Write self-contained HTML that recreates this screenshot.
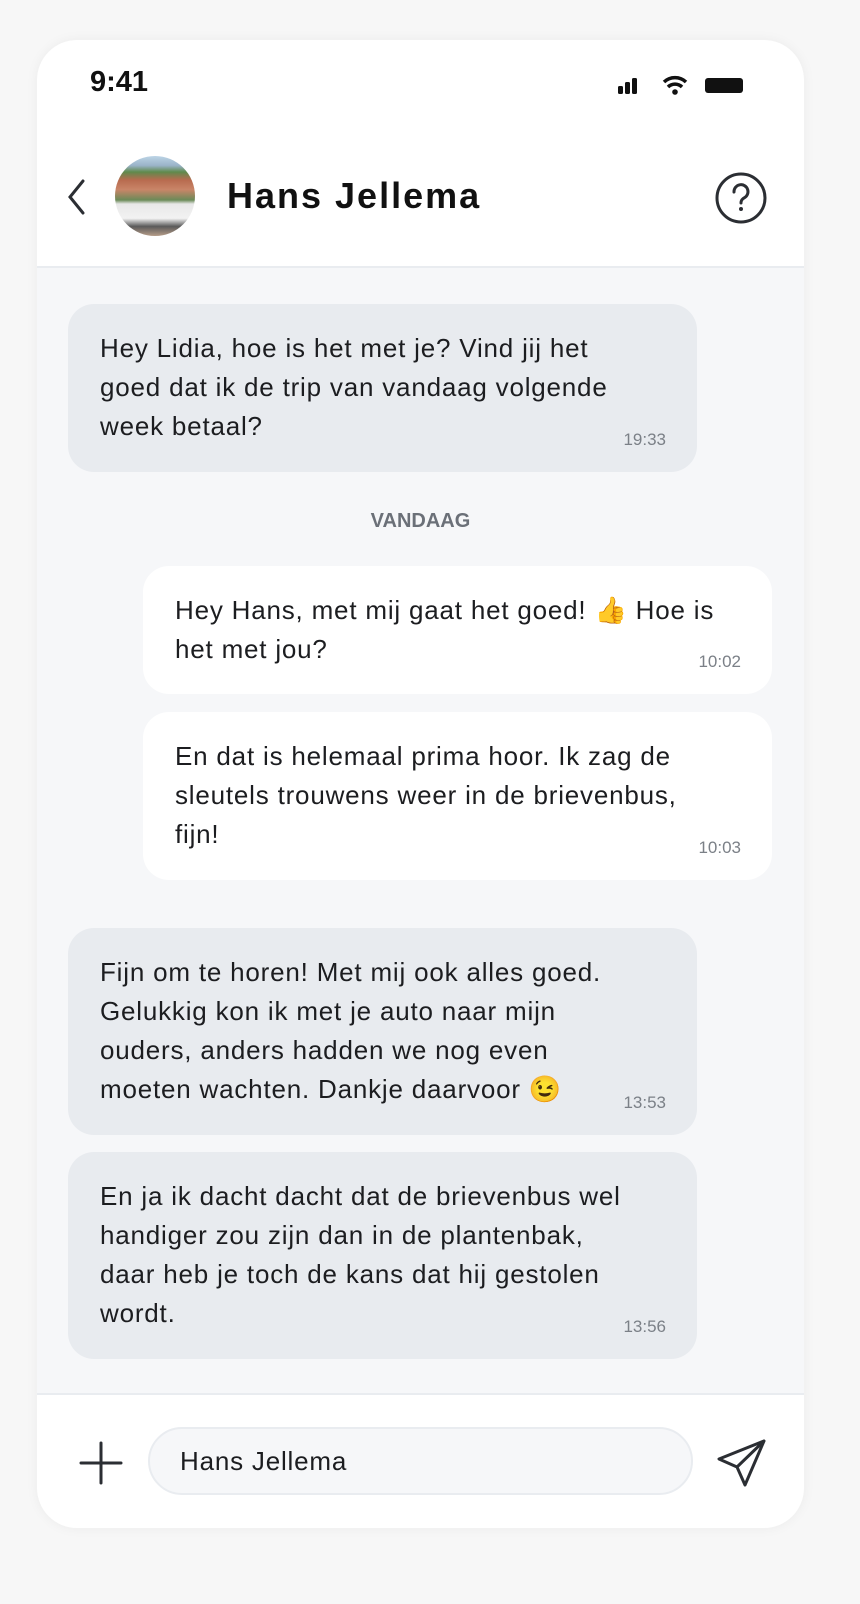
<!DOCTYPE html>
<html><head><meta charset="utf-8"><style>
*{margin:0;padding:0;box-sizing:border-box}
body{width:860px;height:1604px;background:#f7f7f7;font-family:"Liberation Sans",sans-serif;position:relative;overflow:hidden}
.card{position:absolute;left:37px;top:40px;width:767px;height:1488px;background:#fff;border-radius:40px;overflow:hidden;box-shadow:0 0 12px rgba(0,0,0,.05)}
.chat{position:absolute;left:0;top:226px;width:767px;height:1129px;background:#f6f7f9;border-top:2px solid #e9ecf0;border-bottom:2px solid #e9ecf0}
.b{position:absolute;border-radius:26px;font-size:26px;letter-spacing:0.8px;line-height:39px;color:#1c1d20;padding:25px 32px;white-space:nowrap}
.in{left:31px;width:629px;background:#e8ebef}
.out{left:106px;width:629px;background:#fff}
.t{position:absolute;right:31px;bottom:22px;font-size:17px;letter-spacing:0;color:#7b8087;line-height:20px}
</style></head><body>
<div class="card">
 <div style="position:absolute;left:53px;top:26px;font-size:29px;font-weight:bold;color:#111">9:41</div>
 <svg style="position:absolute;left:580px;top:33px" width="130" height="26">
  <rect x="1" y="13" width="5" height="8" rx="1.5" fill="#111"/><rect x="8" y="9" width="5" height="12" rx="1.5" fill="#111"/><rect x="15" y="5" width="5" height="16" rx="1.5" fill="#111"/>
  <path d="M47 9a16 16 0 0 1 22 0" stroke="#111" stroke-width="3.5" fill="none"/><path d="M51 14a10 10 0 0 1 14 0" stroke="#111" stroke-width="3.5" fill="none"/><circle cx="58" cy="19" r="2.8" fill="#111"/>
  <rect x="88" y="5" width="38" height="15" rx="3" fill="#111"/>
 </svg>
 <svg style="position:absolute;left:26px;top:138px" width="30" height="40"><path d="M20 3 L7 19 L20 35" stroke="#2b2e33" stroke-width="3" fill="none" stroke-linecap="round"/></svg>
 <div style="position:absolute;left:78px;top:116px;width:80px;height:80px;border-radius:50%;overflow:hidden;background:linear-gradient(#bcd4e6 0%,#9ab3c8 12%,#5f8a4c 20%,#b86b4f 30%,#c98568 42%,#6b8a58 55%,#e8e8e8 60%,#f2f2f2 78%,#5a5a5a 88%,#b59c88 100%)"></div>
 <div style="position:absolute;left:190px;top:135px;font-size:36px;letter-spacing:2px;font-weight:bold;color:#111">Hans Jellema</div>
 <svg style="position:absolute;left:676px;top:130px" width="56" height="56"><circle cx="28" cy="28" r="24" stroke="#2b2e33" stroke-width="3" fill="none"/><path d="M21 22a7 7 0 1 1 10 6c-2 1-3 2.5-3 5" stroke="#2b2e33" stroke-width="3" fill="none" stroke-linecap="round"/><circle cx="28" cy="39" r="2" fill="#2b2e33"/></svg>
 <div class="chat">
  <div class="b in" style="top:36px;height:168px">Hey Lidia, hoe is het met je? Vind jij het<br>goed dat ik de trip van vandaag volgende<br>week betaal?<span class="t">19:33</span></div>
  <div style="position:absolute;left:0;width:767px;top:242px;text-align:center;font-size:20px;font-weight:bold;color:#6b7078">VANDAAG</div>
  <div class="b out" style="top:298px;height:128px">Hey Hans, met mij gaat het goed! 👍 Hoe is<br>het met jou?<span class="t">10:02</span></div>
  <div class="b out" style="top:444px;height:168px">En dat is helemaal prima hoor. Ik zag de<br>sleutels trouwens weer in de brievenbus,<br>fijn!<span class="t">10:03</span></div>
  <div class="b in" style="top:660px;height:207px">Fijn om te horen! Met mij ook alles goed.<br>Gelukkig kon ik met je auto naar mijn<br>ouders, anders hadden we nog even<br>moeten wachten. Dankje daarvoor 😉<span class="t">13:53</span></div>
  <div class="b in" style="top:884px;height:207px">En ja ik dacht dacht dat de brievenbus wel<br>handiger zou zijn dan in de plantenbak,<br>daar heb je toch de kans dat hij gestolen<br>wordt.<span class="t">13:56</span></div>
 </div>
 <svg style="position:absolute;left:42px;top:1401px" width="44" height="44"><path d="M22 2v40M2 22h40" stroke="#2b2e33" stroke-width="3" stroke-linecap="round"/></svg>
 <div style="position:absolute;left:111px;top:1387px;width:545px;height:68px;border-radius:34px;background:#f6f7f9;border:2px solid #e9ecf0;font-size:26px;letter-spacing:0.8px;color:#1c1d20;padding:17px 0 0 30px">Hans Jellema</div>
 <svg style="position:absolute;left:676px;top:1396px" width="56" height="56"><path d="M51 5 L6 23 L24 31 L32 49 Z M51 5 L24 31" stroke="#2b2e33" stroke-width="3" fill="none" stroke-linejoin="round" stroke-linecap="round"/></svg>
</div>
</body></html>
